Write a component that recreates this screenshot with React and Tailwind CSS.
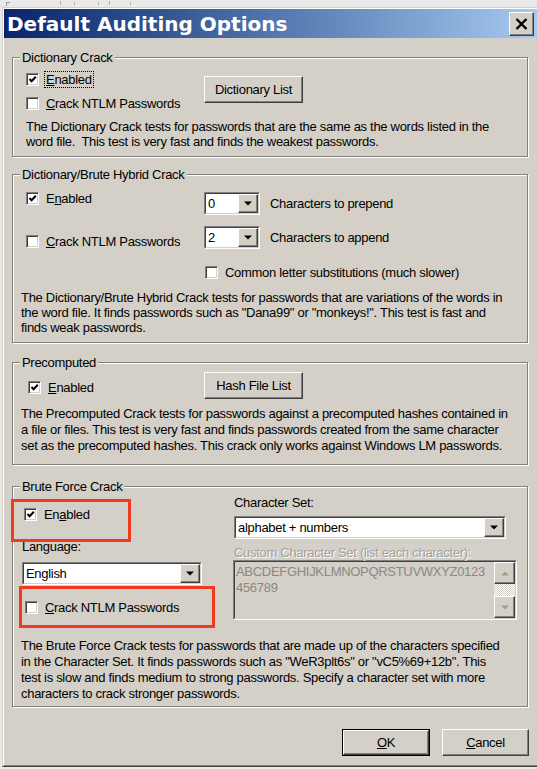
import React from 'react';

const face = "font-['Liberation_Sans',Arial,sans-serif]";

// classic 3d bits
const Check = ({ checked }) => (
  <span className="w-[13px] h-[13px] shrink-0 flex items-center justify-center bg-white border border-[#808080] border-r-white border-b-white shadow-[inset_1px_1px_0_#404040,inset_-1px_-1px_0_#d4d0c8]">
    {checked && (
      <svg width="9" height="9" viewBox="0 0 9 9">
        <path d="M1.5 4 L3.6 6.2 L7.8 1.8" stroke="#000" strokeWidth="2" fill="none" />
      </svg>
    )}
  </span>
);

const Btn = ({ children, className = '' }) => (
  <div className={`flex items-center justify-center bg-[#d4d0c8] border border-white border-r-[#404040] border-b-[#404040] shadow-[inset_-1px_-1px_0_#808080] ${className}`}>
    {children}
  </div>
);

const Arrow = ({ up, color = '#000' }) => (
  <svg width="8" height="5" viewBox="0 0 8 5">
    <polygon points={up ? '0,4.5 8,4.5 4,0.5' : '0,0.5 8,0.5 4,4.5'} fill={color} />
  </svg>
);

const Combo = ({ value, className = '' }) => (
  <div className={`flex h-[23px] bg-white border border-[#808080] border-r-white border-b-white ${className}`}>
    <div className="flex-1 flex border border-[#404040] border-r-[#d4d0c8] border-b-[#d4d0c8]">
      <span className="flex-1 pl-[2px] leading-[19px]">{value}</span>
      <Btn className="w-[20px] h-[19px]">
        <Arrow />
      </Btn>
    </div>
  </div>
);

const Group = ({ title, className = '', children }) => (
  <div className={`ml-[8px] w-[516px] border border-[#808080] shadow-[inset_1px_1px_0_#fff,1px_1px_0_#fff] ${className}`}>
    <div className="-mt-[8px] ml-[7px] w-fit px-[2px] bg-[#d4d0c8] leading-[15px]">{title}</div>
    {children}
  </div>
);

const Row = ({ checked, children, className = '' }) => (
  <div className={`flex items-center gap-[7px] h-[13px] ${className}`}>
    <Check checked={checked} />
    <span className="leading-[15px] whitespace-nowrap">{children}</span>
  </div>
);

export default function App() {
  return (
    <div className={`w-[537px] h-[769px] overflow-hidden bg-[#e9e9e9] text-[13px] tracking-[-0.3px] text-black ${face}`}>
      {/* bits of the window behind */}
      <div className="h-[7px] flex items-start">
        <div className="ml-[6px] mt-[2px] w-[4px] h-[4px] border-t border-l border-[#9a9a9a]" />
        <div className="ml-[50px] mt-[1px] w-px h-[4px] bg-[#b0b0b0]" />
        <div className="ml-[13px] mt-[2px] w-px h-[3px] bg-[#b0b0b0]" />
        <div className="ml-[23px] mt-[2px] w-px h-[3px] bg-[#b0b0b0]" />
        <div className="ml-[10px] mt-[1px] w-px h-[4px] bg-[#b0b0b0]" />
        <div className="ml-[20px] mt-[2px] w-px h-[3px] bg-[#b0b0b0]" />
      </div>

      <div className="ml-[2px] h-[760px] bg-[#d4d0c8] border-t border-l border-[#d4d0c8] border-b border-b-[#404040]">
        <div className="h-full border-t border-l border-white border-b border-b-[#808080]">
          {/* title bar */}
          <div className="h-[29px] flex items-center justify-between pl-[3px] pr-[3px] bg-linear-to-r from-[#0a246a] to-[#a6caf0]">
            <span className="font-['DejaVu_Sans',sans-serif] font-bold text-[20px] tracking-normal text-white leading-[24px] pt-[1px]">
              Default Auditing Options
            </span>
            <Btn className="w-[25px] h-[24px]">
              <svg width="13" height="12" viewBox="0 0 13 12">
                <path d="M1.5 1 L11.5 11 M11.5 1 L1.5 11" stroke="#000" strokeWidth="2.4" />
              </svg>
            </Btn>
          </div>

          {/* Dictionary */}
          <Group title="Dictionary Crack" className="mt-[19px] h-[100px]">
            <div className="flex mt-[7px]">
              <div className="w-[191px] pl-[13px]">
                <div className="flex items-center gap-[6px] h-[15px]">
                  <Check checked />
                  <span className="leading-[15px] px-[1px] outline-1 outline-dotted outline-black">
                    <u>E</u>nabled
                  </span>
                </div>
                <Row className="mt-[10px]">
                  <u>C</u>rack NTLM Passwords
                </Row>
              </div>
              <Btn className="mt-[4px] w-[99px] h-[27px]">Dictionary List</Btn>
            </div>
            <div className="mt-[9px] pl-[13px] leading-[15px] whitespace-pre">
              The Dictionary Crack tests for passwords that are the same as the words listed in the
              <br />
              word file.  This test is very fast and finds the weakest passwords.
            </div>
          </Group>

          {/* Hybrid */}
          <Group title="Dictionary/Brute Hybrid Crack" className="mt-[17px] h-[169px]">
            <div className="flex mt-[10px]">
              <div className="w-[191px] pl-[13px]">
                <Row checked className="mt-[0px]">
                  E<u>n</u>abled
                </Row>
                <Row className="mt-[30px]">
                  <u>C</u>rack NTLM Passwords
                </Row>
              </div>
              <div>
                <div className="flex items-center gap-[10px]">
                  <Combo value="0" className="w-[56px]" />
                  <span>Characters to prepend</span>
                </div>
                <div className="flex items-center gap-[10px] mt-[11px]">
                  <Combo value="2" className="w-[56px]" />
                  <span>Characters to append</span>
                </div>
                <Row className="mt-[17px] ml-[1px]">Common letter substitutions (much slower)</Row>
              </div>
            </div>
            <div className="mt-[11px] pl-[8px] leading-[15px] whitespace-pre">
              The Dictionary/Brute Hybrid Crack tests for passwords that are variations of the words in
              <br />
              the word file. It finds passwords such as "Dana99" or "monkeys!". This test is fast and
              <br />
              finds weak passwords.
            </div>
          </Group>

          {/* Precomputed */}
          <Group title="Precomputed" className="mt-[19px] h-[103px]">
            <div className="flex mt-[2px]">
              <div className="w-[191px] pl-[15px]">
                <Row checked className="mt-[8px] h-[14px]">
                  <u>E</u>nabled
                </Row>
              </div>
              <Btn className="w-[99px] h-[27px]">Hash File List</Btn>
            </div>
            <div className="mt-[7px] pl-[8px] leading-[16px] whitespace-pre">
              The Precomputed Crack tests for passwords against a precomputed hashes contained in
              <br />
              a file or files. This test is very fast and finds passwords created from the same character
              <br />
              set as the precomputed hashes. This crack only works against Windows LM passwords.
            </div>
          </Group>

          {/* Brute force */}
          <Group title="Brute Force Crack" className="relative mt-[21px] h-[221px]">
            <div className="flex">
              <div className="w-[220px]">
                <Row checked className="mt-[14px] pl-[11px]">
                  En<u>a</u>bled
                </Row>
                <div className="mt-[18px] pl-[9px] leading-[15px]">Language:</div>
                <Combo value="English" className="mt-[8px] ml-[9px] w-[180px]" />
                <Row className="mt-[16px] pl-[12px]">
                  <u>C</u>rack NTLM Passwords
                </Row>
              </div>
              <div>
                <div className="mt-[1px] pl-[1px] leading-[15px]">Character Set:</div>
                <Combo value="alphabet + numbers" className="mt-[6px] ml-[1px] w-[272px]" />
                <div className="mt-[6px] pl-[1px] leading-[15px] text-[#a3a09a] [text-shadow:1px_1px_0_#fff]">
                  Custom Character Set (list each character):
                </div>
                <div className="w-[284px] h-[60px] flex border border-[#808080] border-r-white border-b-white">
                  <div className="flex-1 flex border border-[#404040] border-r-[#d4d0c8] border-b-[#d4d0c8] bg-[#d4d0c8]">
                    <div className="flex-1 pl-[1px] pt-[2px] leading-[16px] text-[#8a8883]">
                      ABCDEFGHIJKLMNOPQRSTUVWXYZ0123
                      <br />
                      456789
                    </div>
                    <div className="w-[21px] flex flex-col">
                      <Btn className="h-[22px]">
                        <Arrow up color="#a09d97" />
                      </Btn>
                      <div className="flex-1 bg-[repeating-conic-gradient(#fff_0_25%,#d4d0c8_0_50%)] bg-[length:2px_2px]" />
                      <Btn className="h-[22px]">
                        <Arrow color="#a09d97" />
                      </Btn>
                    </div>
                  </div>
                </div>
              </div>
            </div>
            <div className="mt-[18px] pl-[8px] leading-[16px] whitespace-pre">
              The Brute Force Crack tests for passwords that are made up of the characters specified
              <br />
              in the Character Set. It finds passwords such as "WeR3plt6s" or "vC5%69+12b". This
              <br />
              test is slow and finds medium to strong passwords. Specify a character set with more
              <br />
              characters to crack stronger passwords.
            </div>

            {/* red markup boxes drawn over the screenshot */}
            <div className="absolute left-[-2px] top-[12px] w-[120px] h-[43px] border-[3px] border-[#f23a21]" />
            <div className="absolute left-[6px] top-[99px] w-[196px] h-[42px] border-[3px] border-[#f23a21]" />
          </Group>

          {/* buttons */}
          <div className="mt-[22px] flex justify-end gap-[12px] pr-[8px]">
            <div className="border border-black">
              <Btn className="w-[86px] h-[25px]">
                <span><u>O</u>K</span>
              </Btn>
            </div>
            <Btn className="w-[87px] h-[27px]">
              <span><u>C</u>ancel</span>
            </Btn>
          </div>
        </div>
      </div>
    </div>
  );
}
